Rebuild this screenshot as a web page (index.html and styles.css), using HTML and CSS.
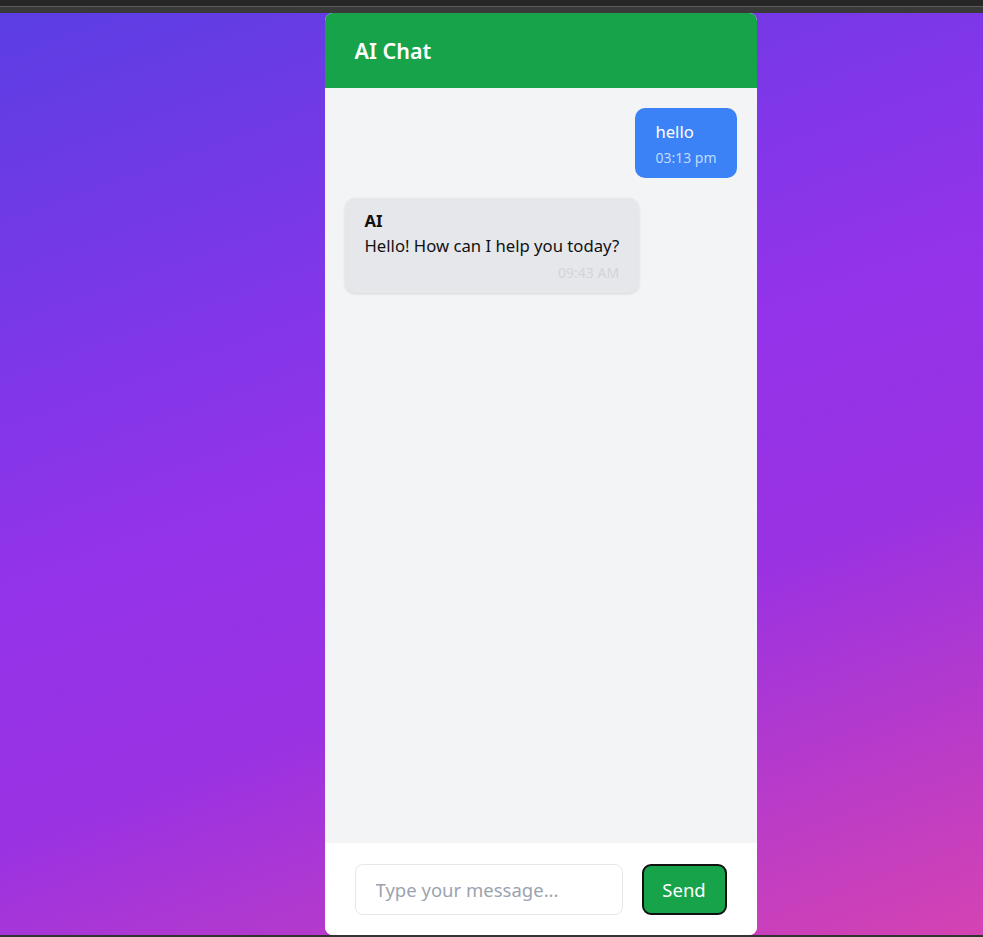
FILE: index.html
```html
<!DOCTYPE html>
<html>
<head>
<meta charset="utf-8">
<link rel="stylesheet" href="styles.css">
</head>
<body>
<div class="chrome"><div class="chrome-line"></div></div>
<main class="stage">
  <section class="chat">
    <header class="chat-header"><h1>AI Chat</h1></header>
    <div class="messages">
      <div class="msg msg-user">
        <div class="msg-text">hello</div>
        <div class="msg-time">03:13 pm</div>
      </div>
      <div class="msg msg-ai">
        <div class="msg-author">AI</div>
        <div class="msg-text">Hello! How can I help you today?</div>
        <div class="msg-time">09:43 AM</div>
      </div>
    </div>
    <form class="composer">
      <input class="composer-input" type="text" placeholder="Type your message...">
      <button class="composer-send" type="button">Send</button>
    </form>
  </section>
</main>
<div class="chrome-bottom"></div>
</body>
</html>
```

FILE: styles.css
```css
* { box-sizing: border-box; }
html, body { margin: 0; padding: 0; height: 100%; }
body {
  font-family: "Noto Sans", "Open Sans", sans-serif;
  display: flex;
  flex-direction: column;
  background: #262626;
}
.chrome {
  height: 13px;
  background: #262626;
  padding-top: 6px;
  flex: none;
}
.chrome-line {
  height: 7px;
  border-top: 1px solid #5a5a5a;
  background: #393939;
}
.stage {
  flex: 1;
  display: flex;
  justify-content: center;
  padding-left: 98px;
  background: linear-gradient(160deg, #5b3ee3 0%, #9333ea 45%, #9a32e2 65%, #d443b2 100%);
  min-height: 0;
}
.chrome-bottom { height: 2px; background: #333; flex: none; }
.chat {
  width: 432px;
  display: flex;
  flex-direction: column;
  background: #fff;
  border-radius: 8px;
  overflow: hidden;
}
.chat-header {
  background: #16a34a;
  height: 75px;
  display: flex;
  align-items: center;
  padding: 0 30px;
  flex: none;
}
.chat-header h1 {
  margin: 0;
  color: #fff;
  font-size: 21.5px;
  font-weight: 600;
}
.messages {
  flex: 1;
  background: #f3f4f6;
  padding: 20px;
  display: flex;
  flex-direction: column;
  gap: 20px;
}
.msg {
  border-radius: 10px;
  padding: 11px 20px 10px;
}
.msg-user {
  align-self: flex-end;
  background: #3b82f6;
  color: #fff;
}
.msg-time { font-size: 14px; line-height: 20px; }
.msg-user .msg-time { color: #bfdbfe; margin-top: 4px; }
.msg-ai {
  align-self: flex-start;
  background: #e5e7eb;
  color: #111;
  box-shadow: 0 1px 3px rgba(0,0,0,0.12);
}
.msg-author { font-weight: 700; font-size: 16.7px; line-height: 24px; }
.msg-text { font-size: 16.7px; line-height: 25px; }
.msg-ai .msg-time { color: #d1d5db; text-align: right; margin-top: 5px; }
.composer {
  margin: 0;
  flex: none;
  height: 92px;
  background: #fff;
  display: flex;
  align-items: center;
  gap: 19px;
  padding: 0 30px;
}
.composer-input {
  width: 268px;
  height: 51px;
  border: 1px solid #e5e7eb;
  border-radius: 8px;
  padding: 0 20px;
  font-family: inherit;
  font-size: 18.5px;
  color: #111;
  outline: none;
}
.composer-input::placeholder { color: #9ca3af; }
.composer-send {
  width: 85px;
  height: 51px;
  background: #16a34a;
  border: 2px solid #111;
  border-radius: 9px;
  color: #fff;
  font-family: inherit;
  font-size: 18.5px;
}
```
